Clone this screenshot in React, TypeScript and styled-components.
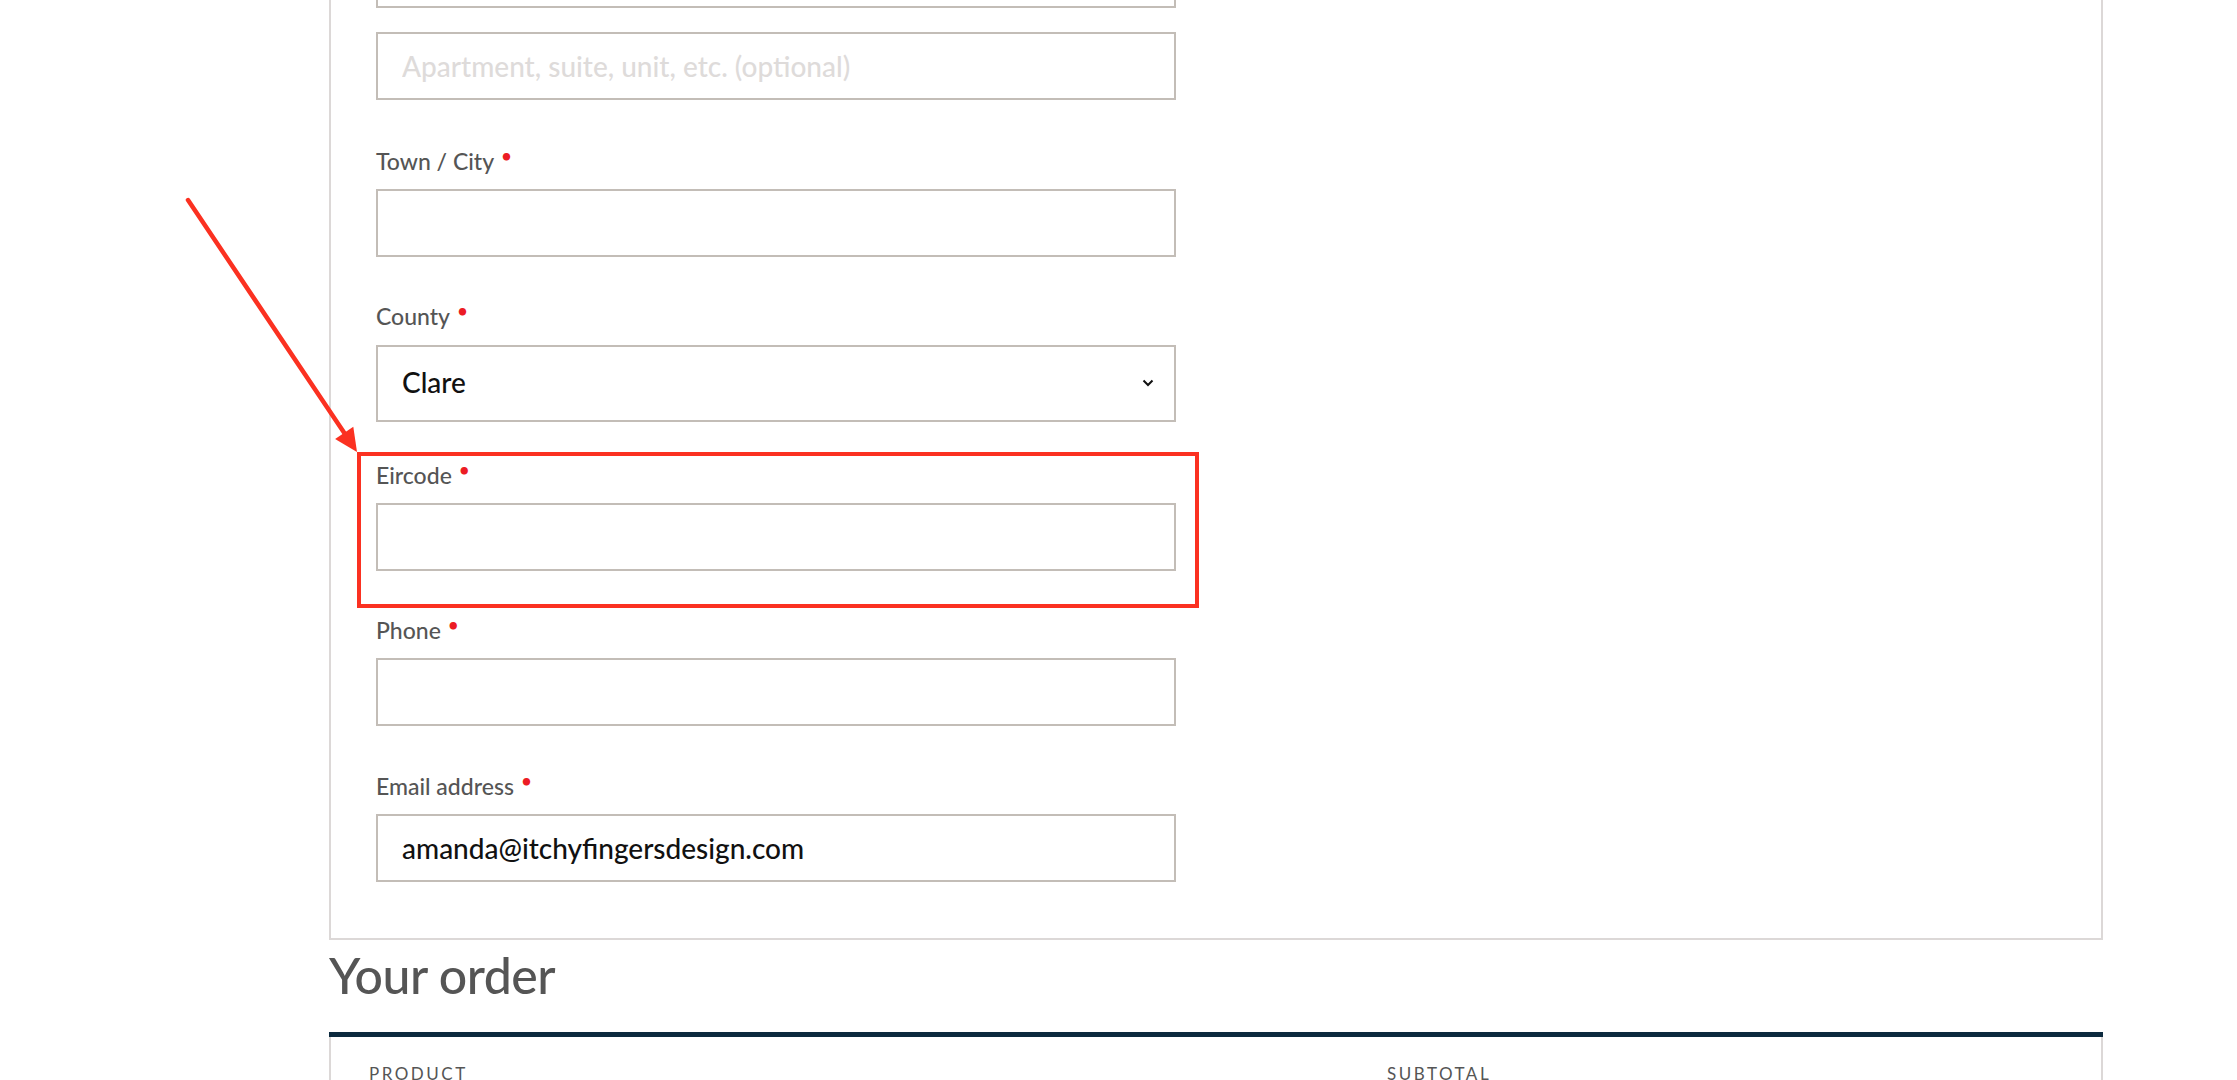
import React from 'react';
import styled, { createGlobalStyle } from 'styled-components';

const GlobalStyle = createGlobalStyle`
  html, body {
    margin: 0;
    padding: 0;
    background: #fff;
    overflow: hidden;
  }
  body {
    font-family: Lato, "Noto Sans", sans-serif;
  }
  * {
    box-sizing: border-box;
  }
`;

const Page = styled.div`
  position: relative;
  width: 2237px;
  height: 1080px;
  overflow: hidden;
  padding-left: 329px;
`;

const Column = styled.div`
  width: 1774px;
`;

// the box is scrolled: only the bottom of the street address input shows
const FormBox = styled.div`
  margin-top: -62px;
  border: 2px solid #dcd8d7;
  padding: 0 45px 56px;
`;

const Field = styled.div<{ $gap?: number; $after?: number }>`
  display: flex;
  flex-direction: column;
  align-items: flex-start;
  gap: ${({ $gap }) => $gap ?? 13}px;
  margin-bottom: ${({ $after }) => $after ?? 44}px;
`;

const Label = styled.label`
  display: block;
  height: 30px;
  font-size: 23px;
  line-height: 30px;
  font-weight: 500;
  color: #555;
`;

const Required = styled.span`
  color: #ec1c24;
  font-size: 19px;
  line-height: 0;
  margin-left: 7px;
  vertical-align: 7px;
`;

const TextInput = styled.input`
  width: 800px;
  height: 68px;
  border: 2px solid #c3bdb7;
  border-radius: 0;
  padding: 0 24px;
  font-family: Lato, "Noto Sans", sans-serif;
  font-size: 28px;
  font-weight: 500;
  color: #111;
  background: #fff;
  outline: none;

  &::placeholder {
    color: #dedbda;
  }
`;

const SelectWrap = styled.div`
  position: relative;
  width: 800px;
`;

const Select = styled.select`
  appearance: none;
  display: block;
  width: 800px;
  height: 77px;
  border: 2px solid #c3bdb7;
  border-radius: 0;
  padding: 0 60px 4px 24px;
  font-family: Lato, "Noto Sans", sans-serif;
  font-size: 28px;
  font-weight: 500;
  color: #111;
  background: #fff;
  outline: none;
`;

const Chevron = styled.svg`
  position: absolute;
  right: 22px;
  top: 50%;
  margin-top: -5px;
  pointer-events: none;
`;

const Heading = styled.h3`
  margin: 5px 0 0;
  font-size: 50px;
  line-height: 60px;
  font-weight: 500;
  color: #555;
  letter-spacing: -0.5px;
`;

const Bar = styled.div`
  margin-top: 27px;
  height: 5px;
  background: #0c2a3e;
`;

const OrderTable = styled.div`
  border-left: 2px solid #dcd8d7;
  border-right: 2px solid #dcd8d7;
  padding: 25px 38px 40px;
`;

const HeadRow = styled.div`
  display: grid;
  grid-template-columns: 1018px 1fr;
`;

const HeadCell = styled.div`
  font-size: 17px;
  line-height: 24px;
  letter-spacing: 2.5px;
  text-transform: uppercase;
  color: #555;
`;

const Annotation = styled.svg`
  position: absolute;
  left: 0;
  top: 0;
  pointer-events: none;
`;

export default function App() {
  return (
    <>
      <GlobalStyle />
      <Page>
        <Column>
          <FormBox>
            <Field $after={24}>
              <TextInput aria-label="Street address" />
            </Field>
            <Field $after={46}>
              <TextInput placeholder="Apartment, suite, unit, etc. (optional)" />
            </Field>
            <Field>
              <Label>
                Town / City<Required>•</Required>
              </Label>
              <TextInput />
            </Field>
            <Field $gap={14} $after={38}>
              <Label>
                County<Required>•</Required>
              </Label>
              <SelectWrap>
                <Select defaultValue="Clare">
                  <option>Carlow</option>
                  <option>Cavan</option>
                  <option>Clare</option>
                  <option>Cork</option>
                  <option>Donegal</option>
                  <option>Dublin</option>
                </Select>
                <Chevron width="12" height="8" viewBox="0 0 12 8">
                  <path d="M1.5 1.5 L6 6 L10.5 1.5" fill="none" stroke="#111" strokeWidth="2" />
                </Chevron>
              </SelectWrap>
            </Field>
            <Field>
              <Label>
                Eircode<Required>•</Required>
              </Label>
              <TextInput />
            </Field>
            <Field $after={45}>
              <Label>
                Phone<Required>•</Required>
              </Label>
              <TextInput type="tel" />
            </Field>
            <Field $after={0}>
              <Label>
                Email address<Required>•</Required>
              </Label>
              <TextInput type="email" defaultValue="amanda@itchyfingersdesign.com" />
            </Field>
          </FormBox>
          <Heading>Your order</Heading>
          <Bar />
          <OrderTable>
            <HeadRow>
              <HeadCell>Product</HeadCell>
              <HeadCell>Subtotal</HeadCell>
            </HeadRow>
          </OrderTable>
        </Column>
        <Annotation width="2237" height="1080" viewBox="0 0 2237 1080">
          <line x1="188" y1="200" x2="345" y2="434" stroke="#fb3121" strokeWidth="4.5" strokeLinecap="round" />
          <polygon points="357,452 353.3,426.8 335.1,439" fill="#fb3121" />
          <rect x="359" y="454" width="838" height="152" fill="none" stroke="#fb3121" strokeWidth="4" />
        </Annotation>
      </Page>
    </>
  );
}
